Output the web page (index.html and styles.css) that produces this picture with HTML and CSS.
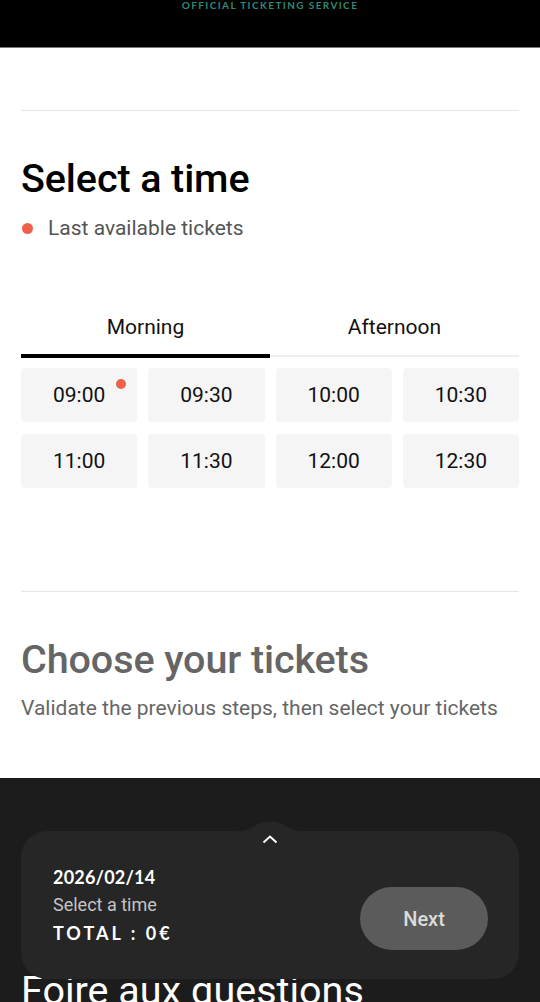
FILE: index.html
```html
<!DOCTYPE html>
<html lang="en">
<head>
<meta charset="utf-8">
<title>Select a time</title>
<link rel="stylesheet" href="styles.css">
</head>
<body>
<header class="topbar">
  <span class="brand">OFFICIAL TICKETING SERVICE</span>
</header>

<main class="content">
  <hr class="divider first">
  <section class="step">
    <h1 class="step-title">Select a time</h1>
    <div class="legend"><span class="dot"></span><span>Last available tickets</span></div>

    <div class="tabs">
      <div class="tab active">Morning</div>
      <div class="tab">Afternoon</div>
    </div>

    <div class="slots">
      <button class="slot">09:00<span class="slot-dot"></span></button>
      <button class="slot">09:30</button>
      <button class="slot">10:00</button>
      <button class="slot">10:30</button>
      <button class="slot">11:00</button>
      <button class="slot">11:30</button>
      <button class="slot">12:00</button>
      <button class="slot">12:30</button>
    </div>
  </section>

  <hr class="divider second">
  <section class="step muted">
    <h2 class="step-title grey">Choose your tickets</h2>
    <p class="step-sub">Validate the previous steps, then select your tickets</p>
  </section>
</main>

<footer class="dark">
  <h2 class="faq">Foire aux questions</h2>
</footer>

<div class="summary">
  <svg class="bump" width="80" height="12" viewBox="0 0 80 12" aria-hidden="true">
    <path d="M0 12 C 14 12, 20 9, 28 4 C 34 0.5, 46 0.5, 52 4 C 60 9, 66 12, 80 12 Z" fill="#262626"/>
  </svg>
  <svg class="chev" width="16" height="10" viewBox="0 0 16 10" aria-hidden="true">
    <path d="M1.5 8.5 L8 2.5 L14.5 8.5" fill="none" stroke="#ffffff" stroke-width="2"/>
  </svg>
  <div class="summary-row">
    <div class="summary-info">
      <div class="date">2026/02/14</div>
      <div class="pick">Select a time</div>
      <div class="total">TOTAL : 0€</div>
    </div>
    <button class="next">Next</button>
  </div>
</div>
</body>
</html>
```

FILE: styles.css
```css
* { box-sizing: border-box; }

body {
  margin: 0;
  font-family: Roboto, "Liberation Sans", sans-serif;
  background: #ffffff;
  color: #111;
}

.topbar {
  height: 48px;
  background: #000;
  border-bottom: 1px solid #7a7a7a;
  display: flex;
  justify-content: center;
  align-items: flex-start;
}

.brand {
  font-family: "Lato", "DejaVu Sans", sans-serif;
  font-weight: 700;
  font-size: 10px;
  line-height: 10px;
  letter-spacing: 1.4px;
  color: #2f8a78;
  margin-top: 0px;
}

.content {
  padding: 0 21px;
}

.divider {
  border: none;
  height: 1px;
  background: #e6e6e6;
  margin: 0;
}
.divider.first { margin-top: 62px; }
.divider.second { margin-top: 103px; }

.step-title {
  margin: 46px 0 0;
  font-size: 39.5px;
  line-height: 44px;
  font-weight: 500;
  color: #000;
  letter-spacing: -0.1px;
}
.step-title.grey {
  color: #656565;
  margin-top: 46px;
}

.legend {
  margin-top: 15px;
  display: flex;
  align-items: center;
  gap: 15px;
  font-size: 21px;
  line-height: 24px;
  color: #555;
}
.legend .dot {
  width: 11px;
  height: 11px;
  border-radius: 50%;
  background: #f0604a;
  margin-left: 1px;
}

.tabs {
  margin-top: 63px;
  display: flex;
  border-bottom: 2px solid #eeeeee;
}
.tab {
  flex: 1;
  text-align: center;
  font-size: 21px;
  line-height: 24px;
  padding: 12px 0 15px;
  border-bottom: 4px solid transparent;
  margin-bottom: -3px;
  color: #111;
}
.tab.active { border-bottom-color: #000; }

.slots {
  margin-top: 11px;
  display: grid;
  grid-template-columns: repeat(4, 1fr);
  column-gap: 11px;
  row-gap: 12px;
}
.slot {
  position: relative;
  height: 54px;
  border: none;
  border-radius: 4px;
  background: #f5f5f5;
  font-family: Roboto, "Liberation Sans", sans-serif;
  font-size: 21px;
  color: #111;
  padding: 0;
}
.slot-dot {
  position: absolute;
  top: 11px;
  right: 11px;
  width: 10px;
  height: 10px;
  border-radius: 50%;
  background: #f0604a;
}

.step-sub {
  margin: 14px 0 0;
  font-size: 21px;
  line-height: 24px;
  color: #666;
}

.dark {
  margin-top: 58px;
  background: #1c1c1c;
  padding: 191px 21px 40px;
}
.faq {
  margin: 0;
  font-size: 39.5px;
  line-height: 44px;
  font-weight: 400;
  color: #fff;
}

.summary {
  position: fixed;
  left: 21px;
  right: 21px;
  bottom: 23px;
  height: 148px;
  background: #262626;
  border-radius: 26px;
  padding: 32px 31px 32px 32px;
}
.bump {
  position: absolute;
  left: 50%;
  top: -11px;
  transform: translateX(-50%);
  display: block;
}
.chev {
  position: absolute;
  left: 50%;
  top: 3px;
  transform: translateX(-50%);
  display: block;
}
.summary-row {
  display: flex;
  justify-content: space-between;
  align-items: flex-end;
}
.summary-info {
  color: #fff;
}
.date {
  font-family: "Lato", "DejaVu Sans", sans-serif;
  font-weight: 700;
  font-size: 18px;
  line-height: 28px;
  letter-spacing: 0.2px;
}
.pick {
  font-size: 18px;
  line-height: 28px;
  color: #c4c4c4;
}
.total {
  font-family: "Lato", "DejaVu Sans", sans-serif;
  font-weight: 700;
  font-size: 18px;
  line-height: 28px;
  letter-spacing: 3px;
}
.next {
  width: 128px;
  height: 63px;
  border: none;
  border-radius: 32px;
  background: #5b5b5b;
  color: #dcdcdc;
  font-family: Roboto, "Liberation Sans", sans-serif;
  font-weight: 500;
  font-size: 20px;
  margin-bottom: -3px;
}
```
